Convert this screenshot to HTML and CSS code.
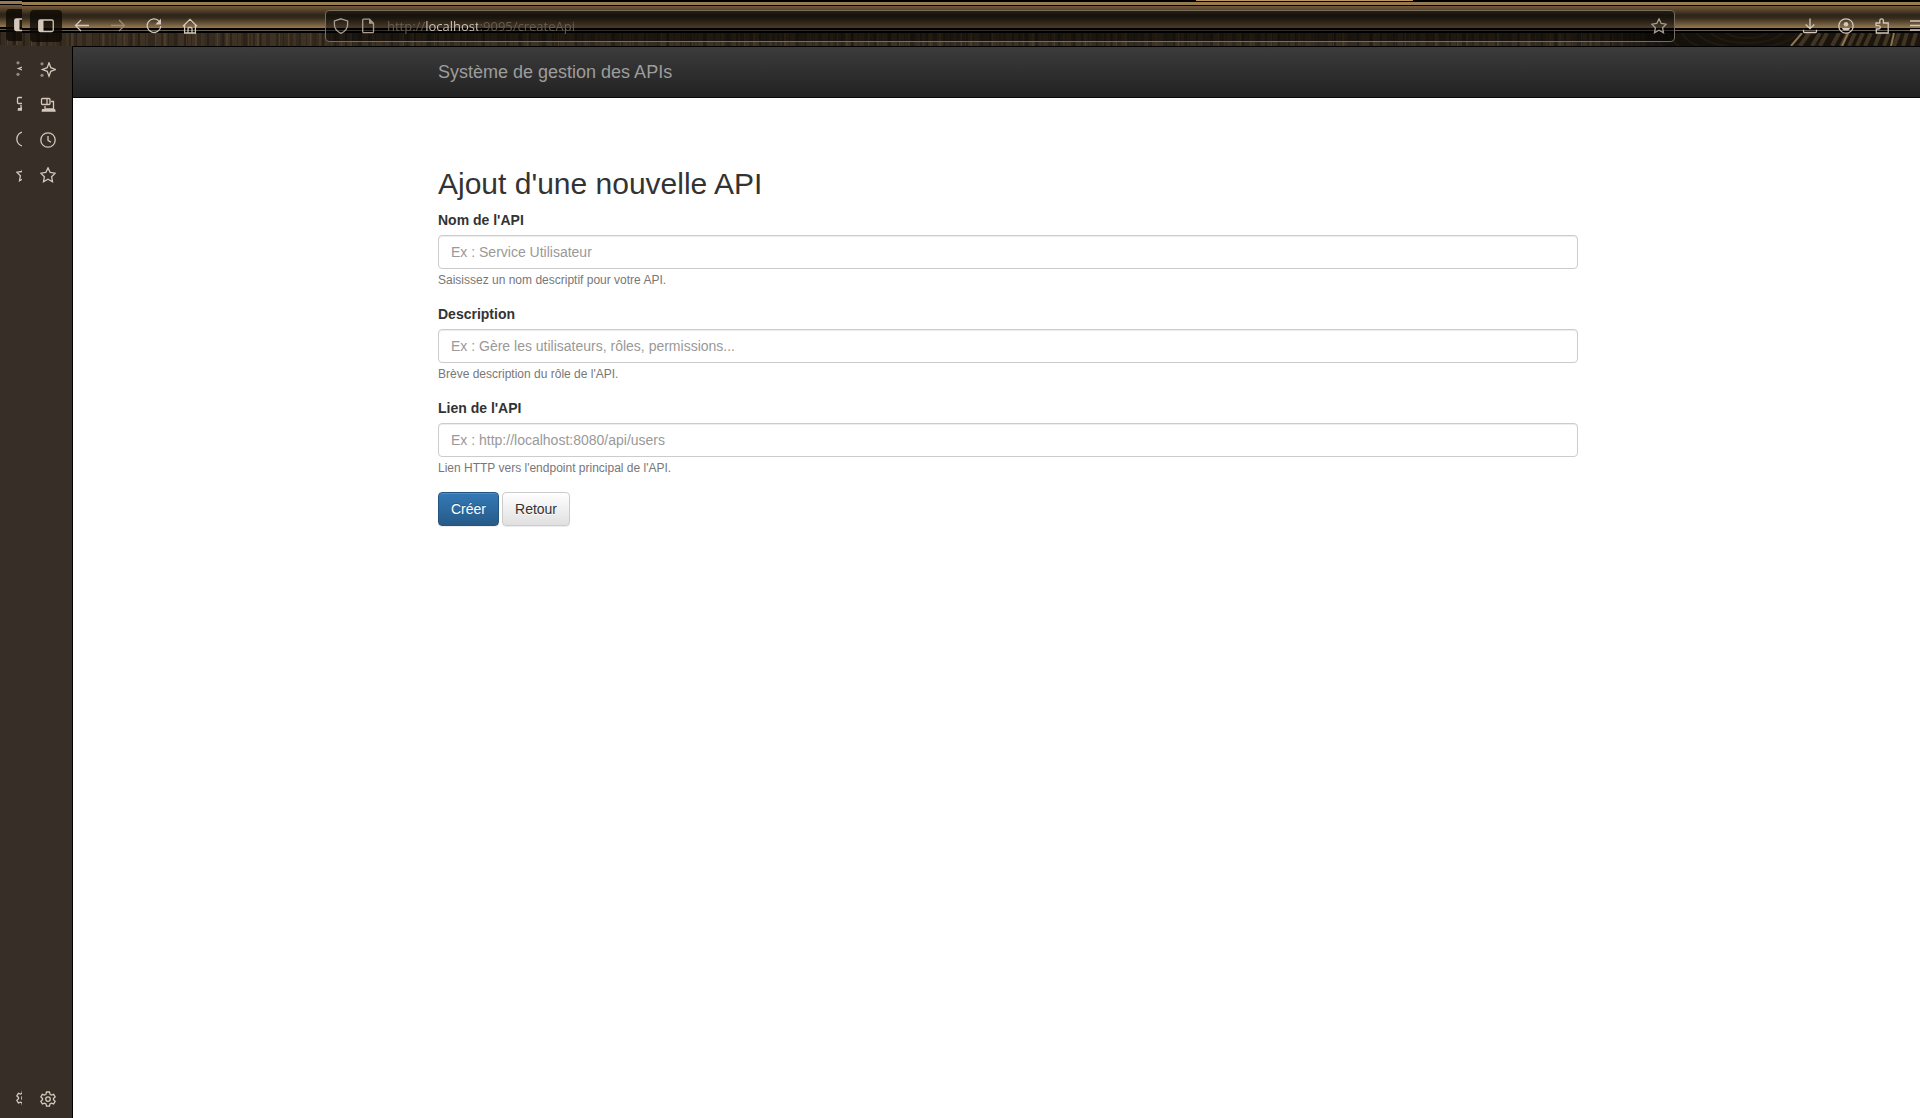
FILE: index.html
```
<!DOCTYPE html>
<html lang="fr">
<head>
<meta charset="utf-8">
<meta name="viewport" content="width=device-width, initial-scale=1">
<title>Système de gestion des APIs</title>
<link rel="stylesheet" href="styles.css">
</head>
<body>
<svg class="sprite" aria-hidden="true">
  <symbol id="panel" viewBox="0 0 16 16"><rect x=".75" y="2" width="14.5" height="11.5" rx="1.5"/><path class="fill" d="M1 2h4.5v11.5H1z"/></symbol>
  <symbol id="back" viewBox="0 0 16 16"><path d="M15 7.500H1.500M7 2 1.500 7.500l5.500 5.500"/></symbol>
  <symbol id="forward" viewBox="0 0 16 16"><path d="M1 7.500h13.500M9 2l5.500 5.500L9 13"/></symbol>
  <symbol id="reload" viewBox="0 0 16 16"><path d="M13.200 3.300A6.800 6.800 0 1 0 14.800 8"/><path class="fill" d="M15 .8v5.700H9.300z"/></symbol>
  <symbol id="home" viewBox="0 0 16 16"><path d="M1 8.300 8 1.300l7 7M2.600 7v8h10.800V7M6 15v-4.500a1 1 0 0 1 1-1h2a1 1 0 0 1 1 1V15"/></symbol>
  <symbol id="shield" viewBox="0 0 16 16"><path d="M8 .8 14.600 3v3.500c0 4-2.600 7-6.600 8.800C4 13.500 1.400 10.500 1.400 6.500V3z"/></symbol>
  <symbol id="page" viewBox="0 0 16 16"><path d="M3.700 1.200H9.500l4 4v8.500a1 1 0 0 1-1 1H3.700a1 1 0 0 1-1-1V2.200a1 1 0 0 1 1-1z"/><path class="fill" d="M9 1.200v4.500h4.500z"/></symbol>
  <symbol id="star" viewBox="0 0 16 16"><path d="M8 .9 10.200 5.500l5 .7-3.600 3.500.9 5L8 12.300l-4.500 2.400.9-5L.8 6.200l5-.7z"/></symbol>
  <symbol id="download" viewBox="0 0 16 16"><path d="M8 .5v10M3.700 6.500 8 10.700l4.300-4.200M1.500 11.800v1.700a1 1 0 0 0 1 1h11a1 1 0 0 0 1-1v-1.700"/></symbol>
  <symbol id="account" viewBox="0 0 16 16"><circle cx="8" cy="8" r="7.200"/><circle class="fill" cx="8" cy="6.300" r="2.300"/><path class="fill" d="M4 10h8c0 3.400-8 3.400-8 0z"/></symbol>
  <symbol id="puzzle" viewBox="0 0 16 16"><path d="M2 5h3.800V2.600a1.800 1.800 0 0 1 3.600 0V5h4.800v10H2.300v-4h2.300a1.700 1.700 0 0 0 0-3.400H2z"/></symbol>
  <symbol id="menu" viewBox="0 0 16 16"><path d="M0 3h16M0 7.500h16M0 12h16"/></symbol>
  <symbol id="sparkle" viewBox="0 0 16 16"><path d="M9 .8 10.800 5.700 15.500 7.500 10.800 9.300 9 14.200 7.200 9.300 2.500 7.500 7.200 5.700z"/><circle class="fill faint" cx="2" cy="1.800" r="1.600"/><circle class="fill faint" cx="2" cy="13.300" r="1.600"/></symbol>
  <symbol id="devices" viewBox="0 0 16 16"><rect x="1.500" y="1.500" width="8.500" height="6" rx="1"/><path d="M7 1.500v6M11 4.500h2.500v7.500H5V9"/><path class="fill" d="M2 12h13l.8 2.800H1.600z"/></symbol>
  <symbol id="clock" viewBox="0 0 16 16"><circle cx="8" cy="8" r="7.200"/><path d="M8 4v4.300l3 2"/></symbol>
  <symbol id="gear" viewBox="0 0 16 16"><path d="M6.500 1h3l.5 2.200 1.400.8 2.200-.7 1.600 2.600L13.500 7.400v1.400l1.700 1.500-1.600 2.600-2.200-.7-1.400.8-.5 2.200h-3L6 13l-1.400-.8-2.200.7L.8 10.300l1.700-1.500V7.400L.8 5.900l1.600-2.600 2.200.7L6 3.200z"/><circle cx="8" cy="8.100" r="2.300"/></symbol>
</svg>

<div class="browser">
  <header class="toolbar">
    <div class="backdrop">
      <svg class="grain" viewBox="0 0 330 13" preserveAspectRatio="none" aria-hidden="true">
        <defs>
          <linearGradient id="shade"><stop offset="0" stop-color="#15110b" stop-opacity="0"/><stop offset=".25" stop-color="#15110b"/><stop offset="1" stop-color="#1c160e"/></linearGradient>
        </defs>
        <rect fill="url(#shade)" stroke="none" width="330" height="13"/>
        <g class="rings">
          <ellipse cx="157" cy="-5" rx="24" ry="10"/><ellipse cx="157" cy="-5" rx="38" ry="15"/><ellipse cx="157" cy="-5" rx="52" ry="20"/><ellipse cx="157" cy="-5" rx="66" ry="27"/><ellipse cx="157" cy="-5" rx="80" ry="34"/><ellipse cx="157" cy="-5" rx="94" ry="42"/>
        </g>
        <path class="brown" d="M219 0l-9 13M230 0l-8 13M237 0l-7 13M249 0l-7 13M258 0l-7 13M265 0l-6 13M273 0l-6 13M281 0l-6 13M290 0l-5 13M299 0l-5 13M309 0l-5 13M317 0l-4 13M326 0l-4 13"/>
        <path class="tan" d="M212 0l-11 13M258 0l-6 13M304 0l-3 13"/>
      </svg>
      <span class="tabline"></span>
    </div>
    <nav class="tools" aria-label="Navigation">
      <button class="tool active" aria-label="Barre latérale"><svg><use href="#panel"/></svg></button>
      <button class="tool" aria-label="Précédent"><svg><use href="#back"/></svg></button>
      <button class="tool" aria-label="Suivant" disabled><svg><use href="#forward"/></svg></button>
      <button class="tool" aria-label="Actualiser"><svg><use href="#reload"/></svg></button>
      <button class="tool" aria-label="Accueil"><svg><use href="#home"/></svg></button>
    </nav>
    <div class="address">
      <svg><use href="#shield"/></svg>
      <svg><use href="#page"/></svg>
      <input class="url" type="text" aria-label="Adresse" value="http://localhost:9095/createApi">
      <button class="bookmark" aria-label="Marque-page"><svg><use href="#star"/></svg></button>
    </div>
    <div class="tools tools-end">
      <button class="tool" aria-label="Téléchargements"><svg><use href="#download"/></svg></button>
      <button class="tool" aria-label="Compte"><svg><use href="#account"/></svg></button>
      <button class="tool" aria-label="Extensions"><svg><use href="#puzzle"/></svg></button>
      <button class="tool" aria-label="Menu"><svg><use href="#menu"/></svg></button>
    </div>
  </header>

  <div class="body">
    <aside class="sidebar">
      <button class="side" aria-label="Assistant"><svg><use href="#sparkle"/></svg></button>
      <button class="side" aria-label="Onglets synchronisés"><svg><use href="#devices"/></svg></button>
      <button class="side" aria-label="Historique"><svg><use href="#clock"/></svg></button>
      <button class="side" aria-label="Marque-pages"><svg><use href="#star"/></svg></button>
      <button class="side last" aria-label="Paramètres"><svg><use href="#gear"/></svg></button>
    </aside>

    <div class="page">
      <nav class="navbar"><div class="container"><a class="brand" href="#">Système de gestion des APIs</a></div></nav>
      <main class="container content">
        <h2>Ajout d'une nouvelle API</h2>
        <form>
          <div class="group">
            <label for="name">Nom de l'API</label>
            <input class="field" id="name" type="text" placeholder="Ex : Service Utilisateur">
            <small>Saisissez un nom descriptif pour votre API.</small>
          </div>
          <div class="group">
            <label for="description">Description</label>
            <input class="field" id="description" type="text" placeholder="Ex : Gère les utilisateurs, rôles, permissions...">
            <small>Brève description du rôle de l'API.</small>
          </div>
          <div class="group">
            <label for="link">Lien de l'API</label>
            <input class="field" id="link" type="text" placeholder="Ex : http://localhost:8080/api/users">
            <small>Lien HTTP vers l'endpoint principal de l'API.</small>
          </div>
          <div class="actions">
            <button class="btn primary" type="submit">Créer</button>
            <button class="btn" type="button">Retour</button>
          </div>
        </form>
      </main>
    </div>
  </div>

  <div class="edge" aria-hidden="true">
    <div class="edge-inner">
      <div class="edge-top">
        <div class="backdrop"></div>
        <span class="tool active"><svg><use href="#panel"/></svg></span>
      </div>
      <div class="sidebar">
        <span class="side"><svg><use href="#sparkle"/></svg></span>
        <span class="side"><svg><use href="#devices"/></svg></span>
        <span class="side"><svg><use href="#clock"/></svg></span>
        <span class="side"><svg><use href="#star"/></svg></span>
        <span class="side last"><svg><use href="#gear"/></svg></span>
      </div>
    </div>
  </div>
</div>
</body>
</html>
```
FILE: styles.css
```
*, *::before, *::after { box-sizing: border-box; }

body {
  margin: 0;
  background: #fff;
  color: #333;
  font: 14px/20px "Liberation Sans", Arial, sans-serif;
}

button, input { font: inherit; }
button { cursor: pointer; }

.sprite { position: absolute; width: 0; height: 0; }

svg { display: block; fill: none; stroke: currentColor; stroke-width: 1.3; }
.fill { fill: currentColor; stroke: none; }
.faint { opacity: .6; }

.browser {
  position: relative;
  display: flex;
  flex-direction: column;
  min-height: 100vh;
  overflow: hidden;
}

/* Browser toolbar */
.toolbar {
  position: relative;
  display: flex;
  align-items: flex-start;
  height: 46px;
  padding: 10px 0 0 30px;
  color: #d3c8bb;
}

.backdrop {
  position: absolute;
  inset: 0;
  background:
    linear-gradient(#000 2px, #967a50 2px 5px, #000 5px 6px, #765b3d 6px, #2e2518 15px, #352b1c 18px, #947750 28px, #000 28px 30px, #655c53 30px 31px, #000 31px 33px, transparent 33px),
    repeating-linear-gradient(90deg, #0004 0 2px, #0000 2px 7px, #0003 7px 8px, #0000 8px 13px, #0003 13px 17px, #0000 17px 23px),
    repeating-linear-gradient(90deg, #6f583a55 0 1px, #0000 1px 9px, #6f583a44 9px 11px, #0000 11px 31px),
    repeating-linear-gradient(90deg, #0003 0 3px, #0000 3px 19px, #0002 19px 29px, #0000 29px 37px),
    #3e3224;
}

.grain { position: absolute; right: 0; bottom: 0; width: 330px; height: 13px; }
.rings { stroke: #201a11; stroke-width: 2; }
.brown { stroke: #403423; stroke-width: 4; }
.tan { stroke: #8d7350; stroke-width: 2; }

.tabline {
  position: absolute;
  top: 0;
  right: 507px;
  width: 217px;
  height: 1px;
  background: #bc965e;
}

.tools { position: relative; display: flex; gap: 4px; }
.tools-end { margin-right: -14px; }

.tool {
  display: flex;
  align-items: center;
  justify-content: center;
  width: 32px;
  height: 32px;
  padding: 0;
  border: 0;
  border-radius: 4px;
  background: none;
  color: #d3c8bb;
}
.tool.active { background: #0c0904cc; }
.tool:disabled { color: #a08b70; }
.tool svg, .address svg, .side svg { flex: none; width: 16px; height: 16px; }

.address {
  position: relative;
  display: flex;
  flex: 1;
  align-items: center;
  gap: 11px;
  height: 32px;
  margin: 0 119px;
  padding: 0 7px;
  border: 1px solid #766c60;
  border-radius: 4px;
  background: #00000080;
  color: #a99e91;
}

.url {
  flex: 1;
  min-width: 0;
  height: 28px;
  padding: 0;
  border: 0;
  outline: 0;
  background: linear-gradient(90deg, #695f52 38px, #d3c8bb 38px 91px, #695f52 91px);
  -webkit-background-clip: text;
  background-clip: text;
  color: transparent;
  font: 13px/20px "Open Sans", "Noto Sans", sans-serif;
}

.bookmark { padding: 0; border: 0; background: none; color: #a99e91; }

/* Side panel and document */
.body { display: flex; flex: 1; }

.sidebar {
  display: flex;
  flex: none;
  flex-direction: column;
  align-items: center;
  width: 73px;
  padding: 6px 0 2px;
  padding-left: 24px;
  border-right: 1px solid #000;
  background: #372e28;
}

.side {
  display: flex;
  align-items: center;
  justify-content: center;
  width: 48px;
  height: 35px;
  padding: 0;
  border: 0;
  background: none;
  color: #d3c8bb;
}
.side.last { margin-top: auto; }

.page { flex: 1; min-width: 0; margin-right: -23px; border-top: 1px solid #000; }

.container { max-width: 1170px; margin: 0 auto; padding: 0 15px; }

.navbar {
  border-bottom: 1px solid #080808;
  background: linear-gradient(#3c3c3c, #222);
}
.brand {
  display: inline-block;
  padding: 15px 0;
  color: #9d9d9d;
  font-size: 18px;
  line-height: 20px;
  text-decoration: none;
  vertical-align: top;
}

.content { padding-top: 49px; }

h2 { margin: 20px 0 10px; font-size: 30px; font-weight: 500; line-height: 33px; }

.group { margin-bottom: 13px; }
.group label { display: block; margin-bottom: 5px; font-weight: 700; }
.group small { display: block; color: #777; font-size: 12px; line-height: 22px; }

.field {
  display: block;
  width: 100%;
  height: 34px;
  padding: 6px 12px;
  border: 1px solid #ccc;
  border-radius: 4px;
  background: #fff;
  box-shadow: inset 0 1px 1px #00000013;
}
.field::placeholder { color: #999; }

.actions { display: flex; gap: 3px; }

.btn {
  padding: 6px 12px;
  border: 1px solid #ccc;
  border-radius: 4px;
  background: linear-gradient(#fff, #e0e0e0);
  box-shadow: inset 0 1px 0 #ffffff26, 0 1px 1px #00000013;
  color: #333;
  text-shadow: 0 1px 0 #fff;
}
.btn.primary {
  border-color: #245580;
  background: linear-gradient(#337ab7, #265a88);
  color: #fff;
  text-shadow: 0 -1px 0 #0003;
}

/* Repeated strip along the left window edge */
.edge {
  position: absolute;
  inset: 0 auto 0 0;
  width: 22px;
  overflow: hidden;
}
.edge-inner {
  position: absolute;
  inset: -1px auto 1px -24px;
  display: flex;
  flex-direction: column;
  width: 73px;
  background: #372e28;
}
.edge-inner .sidebar { flex: 1; }
.edge-top { position: relative; height: 46px; padding: 10px 0 0 30px; }
.edge-top .tool { position: relative; }
```
